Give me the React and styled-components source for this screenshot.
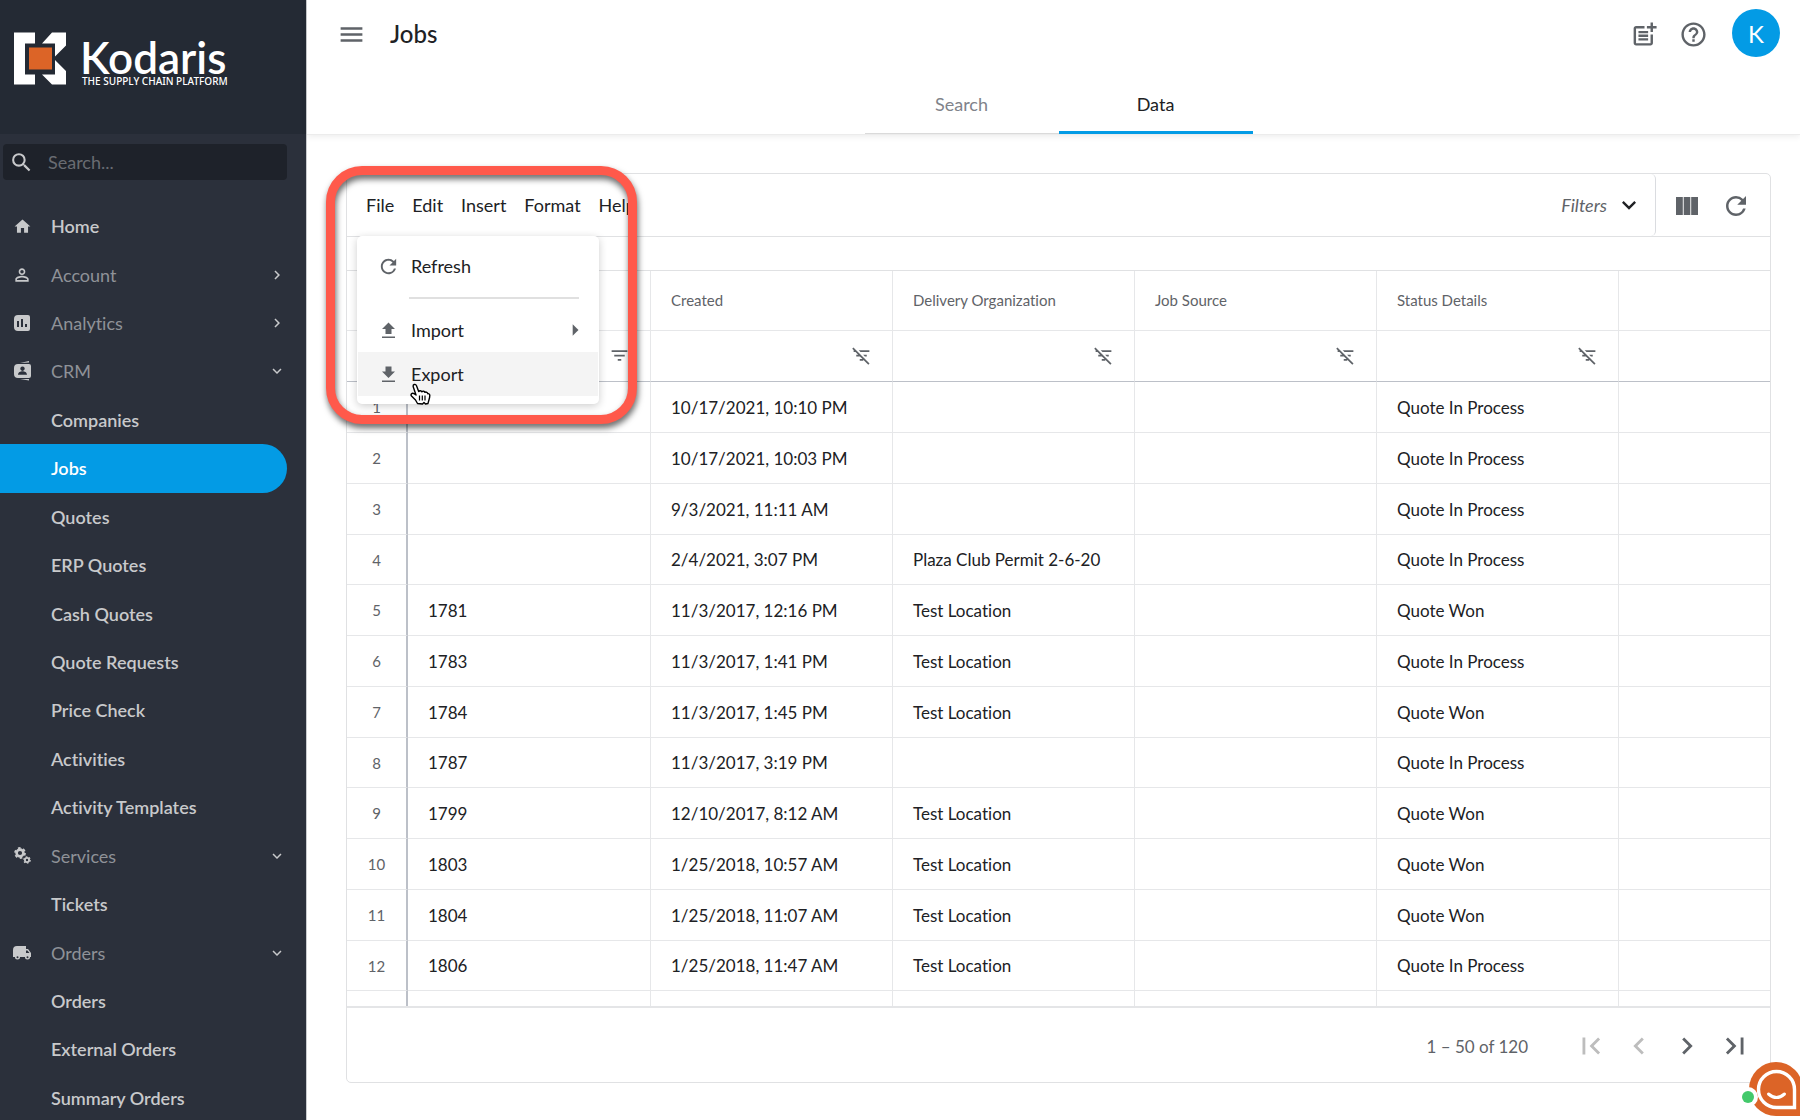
import styled, { createGlobalStyle } from "styled-components";
import {
    MdArrowRight, MdChevronLeft, MdChevronRight, MdExpandMore, MdFilterList,
    MdFilterListOff, MdFirstPage, MdHelpOutline, MdHome, MdLastPage, MdMenu,
    MdPersonOutline, MdPostAdd, MdRefresh, MdSearch
} from "react-icons/md";

const GlobalStyle = createGlobalStyle`
    * {
        box-sizing: border-box;
    }
    body {
        margin: 0;
        background-color: white;
        color: #202124;
        font-family: Lato, "Liberation Sans", sans-serif;
        font-size: 18px;
        font-variant-ligatures: none;
    }
    button, input {
        font-family: inherit;
        font-size: inherit;
        color: inherit;
    }
    svg {
        display: block;
        flex-shrink: 0;
    }
`

const Page = styled.div`
    display: flex;
    height: 100vh;
    overflow: hidden;
`

/* SIDEBAR */

const SideBar = styled.aside`
    display: flex;
    flex-direction: column;
    flex: none;
    width: 307px;
    border-right: 1px solid #c9cbce;
    background-color: #2b303b;
`
const Brand = styled.a`
    display: flex;
    align-items: flex-start;
    height: 134px;
    padding: 32px 14px;
    gap: 14px;
    background-color: #242a34;
    color: white;
    text-decoration: none;
`
const BrandText = styled.div`
    display: flex;
    flex-direction: column;
    padding-top: 6px;
`
const BrandName = styled.span`
    font-size: 44px;
    line-height: 38px;
    font-weight: 600;
`
const BrandTag = styled.span`
    padding-left: 2px;
    font-family: "Noto Sans", sans-serif;
    font-size: 10px;
    line-height: 10px;
    font-weight: 500;
`
const SearchBox = styled.label`
    display: flex;
    align-items: center;
    gap: 12px;
    height: 36px;
    margin: 10px 19px 22px 3px;
    padding-left: 6px;
    border-radius: 4px;
    background-color: #1e222a;
    color: #c8c9cb;
`
const SearchInput = styled.input`
    flex: 1;
    min-width: 0;
    border: none;
    background: none;
    &:focus {
        outline: none;
    }
    &::placeholder {
        color: #696c72;
        opacity: 1;
    }
`
const Nav = styled.nav`
    display: grid;
    flex: 1;
    grid-auto-rows: 1fr;
    margin-bottom: -2px;
`
const NavItem = styled.a`
    display: flex;
    align-items: center;
    margin-right: 19px;
    padding: 0 1px 0 13px;
    border-radius: 0 25px 25px 0;
    background-color: ${(p) => (p.$active ? "#039be5" : "transparent")};
    color: ${(p) => (p.$active ? "white" : p.$group ? "#8f9298" : "#c8c9cb")};
    font-weight: ${(p) => (p.$group ? 400 : 600)};
    text-decoration: none;
`
const NavIcon = styled.span`
    display: flex;
    justify-content: center;
    width: 18px;
    margin-right: 20px;
    color: #c8c9cb;
`
const NavLabel = styled.span`
    flex: 1;
`
const NavArrow = styled.span`
    color: #c8c9cb;
`

/* HEADER */

const Main = styled.main`
    display: flex;
    flex-direction: column;
    flex: 1;
    min-width: 0;
`
const Header = styled.header`
    display: flex;
    flex-direction: column;
    height: 135px;
    border-bottom: 1px solid #ececec;
    box-shadow: 0 2px 6px rgba(0, 0, 0, 0.07);
`
const TopBar = styled.div`
    display: flex;
    align-items: center;
    gap: 20px;
    height: 68px;
    padding: 0 20px 0 30px;
    color: #5f6368;
`
const Title = styled.h1`
    flex: 1;
    margin: 0 0 2px 4px;
    color: #202124;
    font-size: 24px;
    font-weight: 500;
`
const IconButton = styled.button`
    display: flex;
    align-items: center;
    justify-content: center;
    width: ${(p) => p.$width || 29}px;
    height: 34px;
    padding: 0;
    border: none;
    background: none;
    color: ${(p) => (p.$muted ? "#bdbdbd" : "#5f6368")};
    cursor: pointer;
`
const Avatar = styled.button`
    width: 48px;
    height: 48px;
    margin: 0 0 2px 4px;
    padding: 0;
    border: none;
    border-radius: 50%;
    background-color: #039be5;
    color: white;
    font-size: 24px;
    cursor: pointer;
`
const Tabs = styled.div`
    display: flex;
    justify-content: center;
    flex: 1;
    padding-left: 10px;
`
const Tab = styled.button`
    width: 194px;
    border: none;
    border-bottom: ${(p) => (p.$active ? "3px solid #039be5" : "1px solid #dadada")};
    padding: ${(p) => (p.$active ? "9px 0 0" : "7px 0 0")};
    background: none;
    color: ${(p) => (p.$active ? "#202124" : "#80838a")};
    cursor: pointer;
`

/* GRID */

const Card = styled.section`
    display: flex;
    flex-direction: column;
    flex: 1;
    min-height: 0;
    margin: 38px 29px 37px 39px;
    border: 1px solid #e0e1e3;
    border-radius: 5px;
`
const Toolbar = styled.div`
    display: flex;
    height: 63px;
    flex: none;
    border-bottom: 1px solid #e0e1e3;
`
const MenuBar = styled.div`
    position: relative;
    display: flex;
    align-items: center;
    flex: 1;
    gap: 18px;
    padding-left: 19px;
    border-right: 1px solid #dadce0;
    border-radius: 0 5px 5px 0;
`
const MenuButton = styled.button`
    padding: 0;
    border: none;
    background: none;
    cursor: pointer;
`
const FilterButton = styled.button`
    display: flex;
    align-items: center;
    gap: 8px;
    margin-left: auto;
    padding: 0 12px 0 0;
    border: none;
    background: none;
    color: #5f6368;
    font-style: italic;
    cursor: pointer;
    svg {
        color: #202124;
    }
`
const ToolButtons = styled.div`
    display: flex;
    align-items: center;
    gap: 20px;
    padding: 1px 20px 0 16px;
`
const Scroller = styled.div`
    flex: 1;
    min-height: 0;
    overflow: hidden;
    padding-top: 33px;
`
const Table = styled.table`
    width: 100%;
    table-layout: fixed;
    border-collapse: separate;
    border-spacing: 0;
    border-top: 1px solid #e0e1e3;
    tbody tr:nth-child(4n) td {
        height: 50px;
    }
`
const Col = styled.col`
    width: ${(p) => (p.$width ? p.$width + "px" : "auto")};
`
const HeadCell = styled.th`
    height: 60px;
    padding: 0 20px 2px;
    border-right: 1px solid #e6e7e9;
    border-bottom: 1px solid #e6e7e9;
    color: #5f6368;
    font-size: 15px;
    font-weight: 400;
    text-align: left;
    &:last-child {
        border-right: none;
    }
`
const FilterCell = styled.td`
    height: 51px;
    padding: 0 20px 2px;
    border-right: 1px solid #e6e7e9;
    border-bottom: 1px solid #bcc0c8;
    &:last-child {
        border-right: none;
    }
    button {
        margin-left: auto;
    }
`
const Cell = styled.td`
    height: 51px;
    padding: 0 20px;
    border-right: 1px solid #e6e7e9;
    border-bottom: 1px solid #e6e7e9;
    font-size: 17px;
    white-space: nowrap;
    &:last-child {
        border-right: none;
    }
`
const IndexCell = styled(Cell)`
    padding: 0;
    border-right: 2px solid #bcc0c8;
    color: #5f6368;
    font-size: 15px;
    text-align: center;
`
const Pager = styled.footer`
    display: flex;
    align-items: center;
    justify-content: flex-end;
    gap: 14px;
    height: 76px;
    flex: none;
    padding: 2px 18px 0 0;
    border-top: 2px solid #e4e5e7;
    color: #5f6368;
`
const Range = styled.span`
    margin-right: 32px;
    font-size: 17px;
`

/* OVERLAYS */

const Menu = styled.div`
    position: absolute;
    z-index: 2;
    top: 62px;
    left: 10px;
    width: 242px;
    padding: 8px 1px;
    border-radius: 5px;
    background-color: white;
    box-shadow: 0 2px 8px rgba(0, 0, 0, 0.2);
`
const MenuItem = styled.button`
    display: flex;
    align-items: center;
    width: 100%;
    height: 44px;
    padding: 0 9px 0 18px;
    border: none;
    background-color: ${(p) => (p.$hover ? "#f4f4f4" : "white")};
    text-align: left;
    cursor: pointer;
    svg {
        color: #5f6368;
    }
`
const MenuIcon = styled.span`
    display: flex;
    justify-content: center;
    width: 24px;
    margin-right: 11px;
`
const MenuLabel = styled.span`
    flex: 1;
`
const MenuLine = styled.hr`
    margin: 9px 19px 9px 51px;
    border: none;
    border-top: 2px solid #e0e0e0;
`
const Highlight = styled.div`
    position: absolute;
    z-index: 3;
    top: -8px;
    left: -21px;
    width: 311px;
    height: 258px;
    border: 9px solid #ff594b;
    border-radius: 36px;
    filter: drop-shadow(1px 4px 3px rgba(0, 0, 0, 0.6));
    pointer-events: none;
`
const Pointer = styled.svg`
    position: absolute;
    z-index: 4;
    top: 209px;
    left: 63px;
`
const Chat = styled.button`
    position: fixed;
    right: 0;
    bottom: 0;
    padding: 0;
    border: none;
    background: none;
    cursor: pointer;
`

const LogoMark = () => (
    <svg width="52" height="53" viewBox="0 0 52 53">
        <path fill="white" d="M0 0.500h21v11H11v31h10v10H0zM38 0.500h14v13L41 24.500V11.500H28zM41 28l11 11v13.500H38l-10-10h13z" />
        <path fill="#dc6427" d="M15 15.500h23v22H15z" />
    </svg>
)

const AnalyticsIcon = () => (
    <svg width="16" height="16" viewBox="0 0 16 16" fill="currentColor">
        <path fillRule="evenodd" d="M4 0h10a2 2 0 0 1 2 2v12a2 2 0 0 1-2 2H4a4 4 0 0 1-4-4V4a4 4 0 0 1 4-4zM3 6v6h2V6zm4-2v8h2V4zm4 5v3h2V9z" />
    </svg>
)

const CrmIcon = () => (
    <svg width="17" height="20" viewBox="0 0 17 20" fill="currentColor">
        <path d="M6 2l9-2v1.500zM6 18l9 1.500V18z" />
        <path fillRule="evenodd" d="M4 3h11a2 2 0 0 1 2 2v10a2 2 0 0 1-2 2H4a4 4 0 0 1-4-4V7a4 4 0 0 1 4-4zM8.500 5.500a2.200 2.200 0 1 0 .01 0zM4 13.800h9c0-2.500-2.500-3.600-4.500-3.600S4 11.300 4 13.800z" />
    </svg>
)

const GearsIcon = () => (
    <svg width="17" height="17" viewBox="0 0 17 17" fill="none" stroke="currentColor">
        <circle cx="6" cy="6" r="3.400" strokeWidth="2.600" />
        <circle cx="6" cy="6" r="5" strokeWidth="1.800" strokeDasharray="2.600 2.636" />
        <circle cx="13" cy="13" r="2.100" strokeWidth="1.800" />
        <circle cx="13" cy="13" r="3.200" strokeWidth="1.200" strokeDasharray="1.650 1.701" />
    </svg>
)

const TruckIcon = () => (
    <svg width="18" height="14" viewBox="0 0 18 14" fill="currentColor">
        <path fillRule="evenodd" d="M4 0h9v3h2l3 4v4h-1a2.500 2.500 0 0 1-5 0H7a2.500 2.500 0 0 1-5 0H0V4a4 4 0 0 1 4-4zM13 4.500V7h3.500l-2-2.500z" />
        <circle cx="4.500" cy="11.200" r="1.900" />
        <circle cx="14.500" cy="11.200" r="1.900" />
        <circle cx="4.500" cy="11.200" r="1" fill="#2b303b" />
        <circle cx="14.500" cy="11.200" r="1" fill="#2b303b" />
    </svg>
)

const ColumnsIcon = () => (
    <svg width="22" height="18" viewBox="0 0 22 18" fill="currentColor">
        <path d="M0 0h6.800v18H0zM7.700 0h6.600v18H7.700zM15.200 0H22v18h-6.800z" />
    </svg>
)

const ImportIcon = () => (
    <svg width="17" height="17" viewBox="0 0 17 17" fill="currentColor">
        <path d="M2 14.500h13V16H2zM5.500 12V7H2l6.500-6.500L15 7h-3.500v5z" />
    </svg>
)

const ExportIcon = () => (
    <svg width="17" height="17" viewBox="0 0 17 17" fill="currentColor">
        <path d="M2 14.500h13V16H2zM5.500 0.500v5H2L8.500 12 15 5.500h-3.500v-5z" />
    </svg>
)

const HandIcon = () => (
    <Pointer width="21" height="22" viewBox="0 0 21 22">
        <path
            fill="white"
            stroke="black"
            strokeWidth="1.400"
            strokeLinejoin="round"
            d="M7.500 20.500L5.500 17l-4-4c-1.200-1.500.5-3.500 2.500-2.300L6 12 3.300 4c-.8-2.500 2.200-3.700 3.200-1.300l2.200 5.800c.8-1.200 2.500-1 3.200.3.800-1 2.600-.8 3 .6 1.200-.8 2.700 0 2.900 1.300 1.300-.3 2 .8 2 1.800 0 3-1.300 5-1.800 8l-2.500.5-1.500-1.500-1.500 1.500z"
        />
        <path stroke="black" strokeWidth="1.200" d="M9.500 12.500v5M12.300 12.500v5M15 12.500v5" />
    </Pointer>
)

const ChatIcon = () => (
    <svg width="58" height="59" viewBox="0 0 58 59">
        <path fill="#dc6427" d="M34 1a27 27 0 1 0 0 54h27V28A27 27 0 0 0 34 1z" />
        <circle cx="6" cy="36" r="10" fill="white" />
        <path
            fill="#dc6427"
            stroke="white"
            strokeWidth="3.400"
            d="M34.500 10.500a18 18 0 1 0 0 36h18v-18a18 18 0 0 0-18-18z"
        />
        <path fill="none" stroke="white" strokeWidth="3" strokeLinecap="round" d="M26.500 33q8 7 16 0" />
        <circle cx="6" cy="36" r="6" fill="#43c96b" />
    </svg>
)

const navItems = [
    { label: "Home", icon: <MdHome size={19} /> },
    { label: "Account", icon: <MdPersonOutline size={20} />, arrow: "right" },
    { label: "Analytics", icon: <AnalyticsIcon />, arrow: "right" },
    { label: "CRM", icon: <CrmIcon />, arrow: "down" },
    { label: "Companies" },
    { label: "Jobs", active: true },
    { label: "Quotes" },
    { label: "ERP Quotes" },
    { label: "Cash Quotes" },
    { label: "Quote Requests" },
    { label: "Price Check" },
    { label: "Activities" },
    { label: "Activity Templates" },
    { label: "Services", icon: <GearsIcon />, arrow: "down" },
    { label: "Tickets" },
    { label: "Orders", icon: <TruckIcon />, arrow: "down" },
    { label: "Orders" },
    { label: "External Orders" },
    { label: "Summary Orders" }
]

const columns = ["", "Created", "Delivery Organization", "Job Source", "Status Details", ""]

const jobs = [
    ["", "10/17/2021, 10:10 PM", "", "Quote In Process"],
    ["", "10/17/2021, 10:03 PM", "", "Quote In Process"],
    ["", "9/3/2021, 11:11 AM", "", "Quote In Process"],
    ["", "2/4/2021, 3:07 PM", "Plaza Club Permit 2-6-20", "Quote In Process"],
    ["1781", "11/3/2017, 12:16 PM", "Test Location", "Quote Won"],
    ["1783", "11/3/2017, 1:41 PM", "Test Location", "Quote In Process"],
    ["1784", "11/3/2017, 1:45 PM", "Test Location", "Quote Won"],
    ["1787", "11/3/2017, 3:19 PM", "", "Quote In Process"],
    ["1799", "12/10/2017, 8:12 AM", "Test Location", "Quote Won"],
    ["1803", "1/25/2018, 10:57 AM", "Test Location", "Quote Won"],
    ["1804", "1/25/2018, 11:07 AM", "Test Location", "Quote Won"],
    ["1806", "1/25/2018, 11:47 AM", "Test Location", "Quote In Process"]
]

const App = () => (
    <Page>
        <GlobalStyle />
        <SideBar>
            <Brand href="#home">
                <LogoMark />
                <BrandText>
                    <BrandName>Kodaris</BrandName>
                    <BrandTag>THE SUPPLY CHAIN PLATFORM</BrandTag>
                </BrandText>
            </Brand>
            <SearchBox>
                <MdSearch size={25} />
                <SearchInput placeholder="Search..." aria-label="Search" />
            </SearchBox>
            <Nav>
                {navItems.map((item, i) => (
                    <NavItem key={i} href="#nav" $active={item.active} $group={!!item.arrow}>
                        <NavIcon>{item.icon}</NavIcon>
                        <NavLabel>{item.label}</NavLabel>
                        <NavArrow>
                            {item.arrow === "right" && <MdChevronRight size={18} />}
                            {item.arrow === "down" && <MdExpandMore size={18} />}
                        </NavArrow>
                    </NavItem>
                ))}
            </Nav>
        </SideBar>

        <Main>
            <Header>
                <TopBar>
                    <IconButton aria-label="Menu"><MdMenu size={29} /></IconButton>
                    <Title>Jobs</Title>
                    <IconButton aria-label="Add note"><MdPostAdd size={29} /></IconButton>
                    <IconButton aria-label="Help"><MdHelpOutline size={29} /></IconButton>
                    <Avatar>K</Avatar>
                </TopBar>
                <Tabs>
                    <Tab>Search</Tab>
                    <Tab $active>Data</Tab>
                </Tabs>
            </Header>

            <Card>
                <Toolbar>
                    <MenuBar>
                        <MenuButton>File</MenuButton>
                        <MenuButton>Edit</MenuButton>
                        <MenuButton>Insert</MenuButton>
                        <MenuButton>Format</MenuButton>
                        <MenuButton>Help</MenuButton>
                        <FilterButton>Filters <MdExpandMore size={28} /></FilterButton>

                        <Menu>
                            <MenuItem>
                                <MenuIcon><MdRefresh size={23} /></MenuIcon>
                                <MenuLabel>Refresh</MenuLabel>
                            </MenuItem>
                            <MenuLine />
                            <MenuItem>
                                <MenuIcon><ImportIcon /></MenuIcon>
                                <MenuLabel>Import</MenuLabel>
                                <MdArrowRight size={28} />
                            </MenuItem>
                            <MenuItem $hover>
                                <MenuIcon><ExportIcon /></MenuIcon>
                                <MenuLabel>Export</MenuLabel>
                            </MenuItem>
                        </Menu>
                        <Highlight />
                        <HandIcon />
                    </MenuBar>
                    <ToolButtons>
                        <IconButton aria-label="Columns"><ColumnsIcon /></IconButton>
                        <IconButton aria-label="Reload"><MdRefresh size={30} /></IconButton>
                    </ToolButtons>
                </Toolbar>

                <Scroller>
                    <Table>
                        <colgroup>
                            <Col $width={61} />
                            <Col $width={243} />
                            <Col $width={242} />
                            <Col $width={242} />
                            <Col $width={242} />
                            <Col $width={242} />
                            <Col />
                        </colgroup>
                        <thead>
                            <tr>
                                <HeadCell />
                                {columns.map((name, i) => <HeadCell key={i}>{name}</HeadCell>)}
                            </tr>
                            <tr>
                                <FilterCell />
                                {columns.map((name, i) => (
                                    <FilterCell key={i}>
                                        {i < 5 && (
                                            <IconButton $width={22} aria-label={"Filter " + name}>
                                                {i === 0 ? <MdFilterList size={21} /> : <MdFilterListOff size={21} />}
                                            </IconButton>
                                        )}
                                    </FilterCell>
                                ))}
                            </tr>
                        </thead>
                        <tbody>
                            {jobs.map(([job, created, organization, status], i) => (
                                <tr key={i}>
                                    <IndexCell>{i + 1}</IndexCell>
                                    <Cell>{job}</Cell>
                                    <Cell>{created}</Cell>
                                    <Cell>{organization}</Cell>
                                    <Cell />
                                    <Cell>{status}</Cell>
                                    <Cell />
                                </tr>
                            ))}
                            <tr>
                                <IndexCell />
                                {columns.map((name, i) => <Cell key={i} />)}
                            </tr>
                        </tbody>
                    </Table>
                </Scroller>

                <Pager>
                    <Range>1 – 50 of 120</Range>
                    <IconButton $width={34} $muted aria-label="First page"><MdFirstPage size={34} /></IconButton>
                    <IconButton $width={34} $muted aria-label="Previous page"><MdChevronLeft size={34} /></IconButton>
                    <IconButton $width={34} aria-label="Next page"><MdChevronRight size={34} /></IconButton>
                    <IconButton $width={34} aria-label="Last page"><MdLastPage size={34} /></IconButton>
                </Pager>
            </Card>
        </Main>
        <Chat aria-label="Chat"><ChatIcon /></Chat>
    </Page>
)

export default App;
